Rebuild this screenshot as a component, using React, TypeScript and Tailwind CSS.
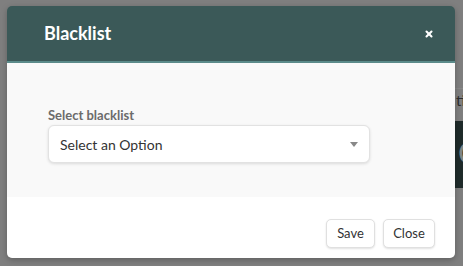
import { X } from "lucide-react";

export default function App() {
  return (
    <div
      className="relative w-[463px] h-[266px] overflow-hidden bg-[#7f7f7f]"
      style={{ fontFamily: "Lato, 'Open Sans', sans-serif" }}
    >
      {/* page behind the overlay */}
      <div className="absolute left-[455px] top-[88px] flex flex-col w-[20px]">
        <div className="h-[1px] bg-[#888]" />
        <div className="h-[32px] pl-[1px] pt-[4px] text-[15px] text-[#2e2e2e] leading-none">ti</div>
        <div className="h-[67px] bg-[#1f2b2a] pl-[3px] pt-[16px] text-[30px] leading-none text-[#7f8685]">C</div>
      </div>

      {/* modal */}
      <div className="absolute left-[7px] top-[6px] w-[448px] rounded-[5px] overflow-hidden shadow-[0_2px_6px_rgba(0,0,0,0.25)]">
        <div className="flex items-center justify-between h-[57px] bg-[#3b5958] border-b-2 border-[#5b8b8a] pl-[37px] pr-[21px]">
          <h2 className="text-white text-[18px] font-bold">Blacklist</h2>
          <X className="w-[10px] h-[10px] text-white" strokeWidth={5} />
        </div>

        <div className="flex flex-col h-[134px] bg-[#f9f9f9] px-[41px] pt-[43px]">
          <label className="block text-[13px] font-bold text-[#6b6b6b] leading-[18px] mb-[1px]">
            Select blacklist
          </label>
          <div className="flex items-center justify-between w-[322px] h-[38px] bg-white rounded-[6px] border border-[#e2e2e2] shadow-[0_1px_3px_rgba(0,0,0,0.12)] pl-[11px] pr-[11px]">
            <span className="text-[14px] text-[#333]">Select an Option</span>
            <svg width="8" height="5" viewBox="0 0 8 5">
              <path d="M0 0H8L4 5Z" fill="#888" />
            </svg>
          </div>
        </div>

        <div className="flex justify-end items-start gap-[8px] h-[61px] bg-white pt-[22px] pr-[20px]">
          <button className="h-[29px] w-[49px] rounded-[5px] bg-white border border-[#e0e0e0] shadow-[0_1px_2px_rgba(0,0,0,0.12)] text-[13px] text-[#333]">
            Save
          </button>
          <button className="h-[29px] w-[52px] rounded-[5px] bg-white border border-[#e0e0e0] shadow-[0_1px_2px_rgba(0,0,0,0.12)] text-[13px] text-[#333]">
            Close
          </button>
        </div>
      </div>
    </div>
  );
}
